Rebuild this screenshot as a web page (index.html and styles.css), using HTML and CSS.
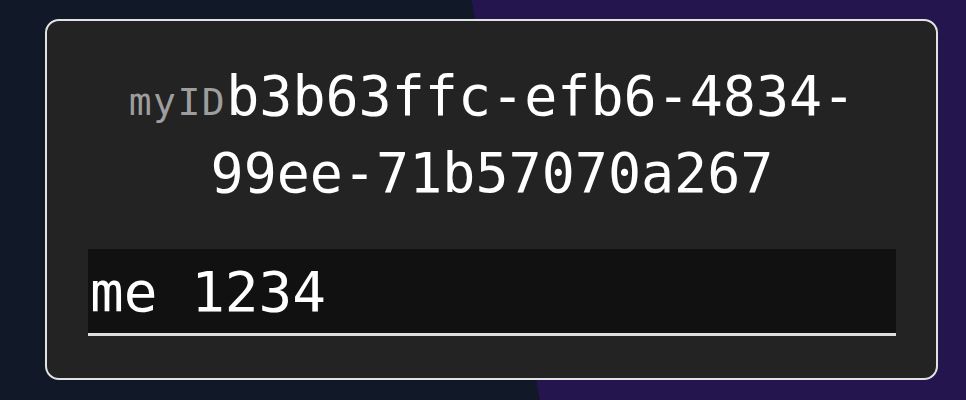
FILE: index.html
```html
<!DOCTYPE html>
<html lang="en">
<head>
<meta charset="utf-8">
<title>myID</title>
<link rel="stylesheet" href="styles.css">
</head>
<body>
  <main class="card">
    <h1 class="id-line"><span class="id-label">myID</span>b3b63ffc-efb6-4834-<wbr>99ee-71b57070a267</h1>
    <input class="name-input" type="text" value="me 1234" aria-label="name">
  </main>
</body>
</html>
```
FILE: styles.css
```css
html, body {
  margin: 0;
  padding: 0;
}

body {
  min-height: 400px;
  background: linear-gradient(80.35deg, #111827 52.2%, #24154f 52.2%);
  font-family: "DejaVu Sans Mono", "Liberation Mono", monospace;
  color: #ffffff;
  padding: 19px 28px 0 45px;
  box-sizing: border-box;
}

.card {
  display: flex;
  flex-direction: column;
  background: #232323;
  border: 2px solid #e2e2e2;
  border-radius: 14px;
  padding: 40px 40px 42px 41px;
}

.id-line {
  margin: 0 0 40px 0;
  text-align: center;
  font-weight: 400;
  font-size: 55px;
  line-height: 71px;
  color: #ffffff;
}

.id-label {
  font-size: 38px;
  letter-spacing: 1.5px;
  color: #9e9e9e;
}

.name-input {
  display: block;
  width: 100%;
  height: 87px;
  box-sizing: border-box;
  margin: 0;
  padding: 0 2px;
  background: #111111;
  border: none;
  border-bottom: 3px solid #dedede;
  color: #ffffff;
  font-family: "DejaVu Sans Mono", "Liberation Mono", monospace;
  font-size: 56px;
  outline: none;
}
```
